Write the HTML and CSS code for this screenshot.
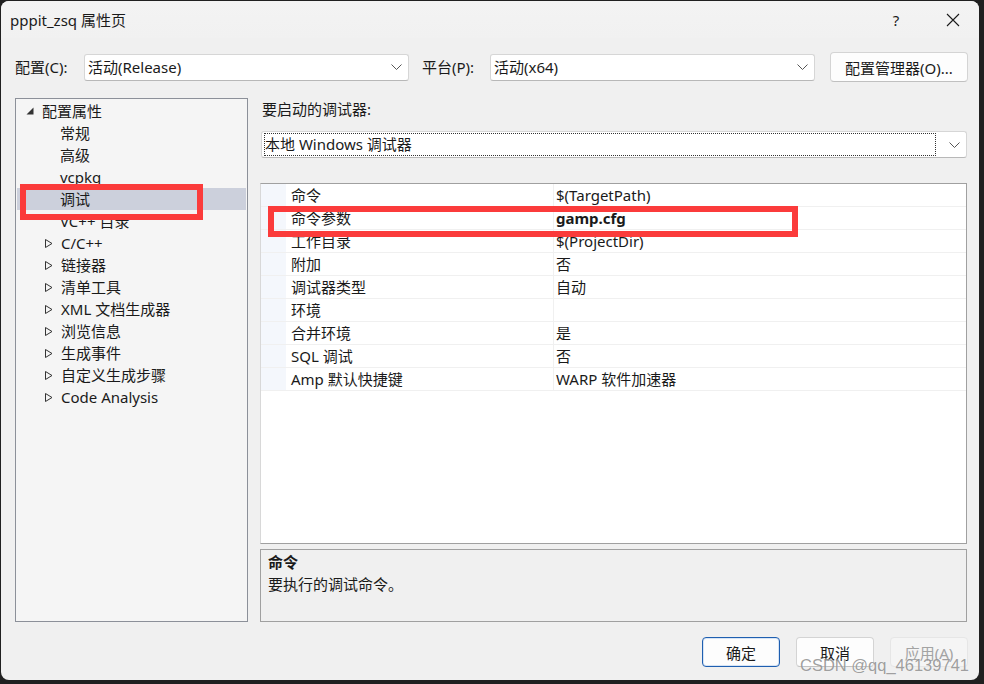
FILE: index.html
```html
<!DOCTYPE html>
<html lang="zh-CN">
<head>
    <meta charset="UTF-8">
    <title>pppit_zsq 属性页</title>
    <link rel="stylesheet" href="styles.css">
</head>
<body>
    <div class="window">
        <div class="titlebar">
            <span class="title">pppit_zsq 属性页</span>
            <span class="help">?</span>
            <span class="close">
                <svg width="14" height="14" viewBox="0 0 14 14"><path d="M1 1 L13 13 M13 1 L1 13" stroke="#1a1a1a" stroke-width="1.1" fill="none"/></svg>
            </span>
        </div>

        <div class="toolbar">
            <span class="label label-config">配置(C):</span>
            <div class="select select-config">
                <span class="select-text">活动(Release)</span>
                <svg class="chevron" width="11" height="6" viewBox="0 0 11 6"><path d="M0.5 0.5 L5.5 5.5 L10.5 0.5" stroke="#555" stroke-width="1" fill="none"/></svg>
            </div>
            <span class="label label-platform">平台(P):</span>
            <div class="select select-platform">
                <span class="select-text">活动(x64)</span>
                <svg class="chevron" width="11" height="6" viewBox="0 0 11 6"><path d="M0.5 0.5 L5.5 5.5 L10.5 0.5" stroke="#555" stroke-width="1" fill="none"/></svg>
            </div>
            <button class="btn btn-manager">配置管理器(O)...</button>
        </div>

        <div class="main">
            <div class="tree">
                <div class="tree-row">
                    <svg class="expander" width="8" height="8" viewBox="0 0 8 8"><path d="M7.5 0.5 L7.5 7.5 L0.5 7.5 Z" fill="#333"/></svg>
                    <span>配置属性</span>
                </div>
                <div class="tree-row child">常规</div>
                <div class="tree-row child">高级</div>
                <div class="tree-row child">vcpkq</div>
                <div class="tree-row child selected">调试</div>
                <div class="tree-row child">VC++ 目录</div>
                <div class="tree-row group"><svg class="expander" width="8" height="9" viewBox="0 0 8 9"><path d="M0.5 0.5 L7 4.5 L0.5 8.5 Z" stroke="#333" fill="none"/></svg><span>C/C++</span></div>
                <div class="tree-row group"><svg class="expander" width="8" height="9" viewBox="0 0 8 9"><path d="M0.5 0.5 L7 4.5 L0.5 8.5 Z" stroke="#333" fill="none"/></svg><span>链接器</span></div>
                <div class="tree-row group"><svg class="expander" width="8" height="9" viewBox="0 0 8 9"><path d="M0.5 0.5 L7 4.5 L0.5 8.5 Z" stroke="#333" fill="none"/></svg><span>清单工具</span></div>
                <div class="tree-row group"><svg class="expander" width="8" height="9" viewBox="0 0 8 9"><path d="M0.5 0.5 L7 4.5 L0.5 8.5 Z" stroke="#333" fill="none"/></svg><span>XML 文档生成器</span></div>
                <div class="tree-row group"><svg class="expander" width="8" height="9" viewBox="0 0 8 9"><path d="M0.5 0.5 L7 4.5 L0.5 8.5 Z" stroke="#333" fill="none"/></svg><span>浏览信息</span></div>
                <div class="tree-row group"><svg class="expander" width="8" height="9" viewBox="0 0 8 9"><path d="M0.5 0.5 L7 4.5 L0.5 8.5 Z" stroke="#333" fill="none"/></svg><span>生成事件</span></div>
                <div class="tree-row group"><svg class="expander" width="8" height="9" viewBox="0 0 8 9"><path d="M0.5 0.5 L7 4.5 L0.5 8.5 Z" stroke="#333" fill="none"/></svg><span>自定义生成步骤</span></div>
                <div class="tree-row group"><svg class="expander" width="8" height="9" viewBox="0 0 8 9"><path d="M0.5 0.5 L7 4.5 L0.5 8.5 Z" stroke="#333" fill="none"/></svg><span>Code Analysis</span></div>
            </div>

            <div class="content">
                <div class="debugger-label">要启动的调试器:</div>
                <div class="select select-debugger">
                    <span class="focus-box">本地 Windows 调试器</span>
                    <svg class="chevron" width="11" height="6" viewBox="0 0 11 6"><path d="M0.5 0.5 L5.5 5.5 L10.5 0.5" stroke="#555" stroke-width="1" fill="none"/></svg>
                </div>

                <div class="grid">
                    <div class="grid-row"><span class="gutter"></span><span class="name">命令</span><span class="value">$(TargetPath)</span></div>
                    <div class="grid-row"><span class="gutter"></span><span class="name">命令参数</span><span class="value bold">gamp.cfg</span></div>
                    <div class="grid-row"><span class="gutter"></span><span class="name">工作目录</span><span class="value">$(ProjectDir)</span></div>
                    <div class="grid-row"><span class="gutter"></span><span class="name">附加</span><span class="value">否</span></div>
                    <div class="grid-row"><span class="gutter"></span><span class="name">调试器类型</span><span class="value">自动</span></div>
                    <div class="grid-row"><span class="gutter"></span><span class="name">环境</span><span class="value"></span></div>
                    <div class="grid-row"><span class="gutter"></span><span class="name">合并环境</span><span class="value">是</span></div>
                    <div class="grid-row"><span class="gutter"></span><span class="name">SQL 调试</span><span class="value">否</span></div>
                    <div class="grid-row"><span class="gutter"></span><span class="name">Amp 默认快捷键</span><span class="value">WARP 软件加速器</span></div>
                    <div class="grid-rest"><span class="gutter"></span></div>
                </div>

                <div class="description">
                    <div class="desc-title">命令</div>
                    <div class="desc-text">要执行的调试命令。</div>
                </div>
            </div>
        </div>

        <div class="footer">
            <button class="btn btn-default">确定</button>
            <button class="btn">取消</button>
            <button class="btn btn-disabled">应用(A)</button>
        </div>

        <div class="mark mark-tree"></div>
        <div class="mark mark-grid"></div>
        <div class="watermark">CSDN @qq_46139741</div>
    </div>
</body>
</html>
```

FILE: styles.css
```css
body {
    margin: 0;
    background-color: #202020;
    font-family: "Noto Sans", "Noto Sans CJK SC", sans-serif;
    font-size: 15px;
    color: #1a1a1a;
}

.window {
    position: relative;
    margin: 1px 0 0 1px;
    width: 978px;
    height: 679px;
    border-radius: 8px;
    background-color: #f0f0f0;
    overflow: hidden;
    display: flex;
    flex-direction: column;
}

.titlebar {
    height: 37px;
    display: flex;
    align-items: center;
    padding-left: 9px;
    background: linear-gradient(#f3f3f3, #f1f1f1);
}

.title {
    flex: 1;
    line-height: 20px;
}

.help {
    width: 20px;
    margin-right: 40px;
    text-align: center;
    font-size: 15px;
}

.close {
    width: 14px;
    height: 14px;
    margin-right: 19px;
    display: flex;
}

.toolbar {
    margin-top: 14px;
    height: 30px;
    display: flex;
    align-items: center;
    padding-left: 14px;
}

.label {
    line-height: 20px;
}

.label-config {
    width: 69px;
}

.label-platform {
    width: 68px;
    margin-left: 13px;
}

.select {
    height: 27px;
    box-sizing: border-box;
    background-color: #ffffff;
    border: 1px solid #d6d6d6;
    border-bottom-color: #b8b8b8;
    border-radius: 3px;
    display: flex;
    align-items: center;
}

.select-text {
    flex: 1;
    padding-left: 3px;
    line-height: 20px;
}

.select-config,
.select-platform {
    width: 325px;
}

.chevron {
    margin-right: 6px;
}

.btn {
    font-family: inherit;
    font-size: 15px;
    color: #1a1a1a;
    background-color: #fdfdfd;
    border: 1px solid #d4d4d4;
    border-bottom-color: #c0c0c0;
    border-radius: 4px;
    padding: 0;
    height: 30px;
    width: 78px;
}

.btn-manager {
    width: 138px;
    margin-left: 15px;
}

.main {
    margin-top: 16px;
    height: 524px;
    display: flex;
    padding-left: 14px;
}

.tree {
    width: 233px;
    box-sizing: border-box;
    border: 1px solid #8c9099;
    background-color: #f5f5f5;
    padding-top: 1px;
}

.tree-row {
    height: 22px;
    line-height: 22px;
    display: flex;
    align-items: center;
    margin-left: 1px;
    margin-right: 1px;
}

.tree-row .expander {
    margin-left: 9px;
    margin-right: 8px;
}

.tree-row.child {
    padding-left: 43px;
}

.tree-row.group .expander {
    margin-left: 28px;
    margin-right: 8px;
}

.tree-row.selected {
    background-color: #ccd0dc;
}

.content {
    width: 707px;
    margin-left: 12px;
    display: flex;
    flex-direction: column;
}

.debugger-label {
    height: 22px;
    line-height: 22px;
    padding-left: 2px;
}

.select-debugger {
    margin-top: 11px;
    margin-left: 1px;
    width: 706px;
}

.focus-box {
    flex: 1;
    margin: 0 13px 0 2px;
    height: 21px;
    line-height: 21px;
    border: 1px dotted #333;
}

.grid {
    margin-top: 25px;
    height: 361px;
    box-sizing: border-box;
    border: 1px solid #a0a0a0;
    border-left-color: #d8d8d8;
    background-color: #ffffff;
    display: flex;
    flex-direction: column;
}

.grid-row {
    height: 23px;
    box-sizing: border-box;
    border-bottom: 1px solid #f0f0f0;
    display: flex;
    line-height: 22px;
}

.gutter {
    width: 25px;
    background-color: #f4f7fc;
    flex-shrink: 0;
}

.name {
    width: 268px;
    box-sizing: border-box;
    padding-left: 5px;
    border-right: 1px solid #f0f0f0;
}

.value {
    flex: 1;
    padding-left: 2px;
}

.bold {
    font-weight: bold;
}

.grid-rest {
    flex: 1;
    display: flex;
}

.grid-rest .gutter {
    background-color: #ffffff;
}

.description {
    margin-top: 5px;
    height: 73px;
    box-sizing: border-box;
    border: 1px solid #a0a0a0;
    background-color: #f0f0f0;
    padding: 1px 0 0 7px;
}

.desc-title {
    font-weight: bold;
    line-height: 22px;
}

.desc-text {
    line-height: 22px;
}

.footer {
    margin-top: 15px;
    display: flex;
    justify-content: flex-end;
    gap: 16px;
    padding-right: 11px;
}

.btn-default {
    border: 1px solid #1f5fb0;
    box-shadow: inset 0 0 0 1px #d6e4f5;
}

.btn-disabled {
    color: #a3a3a3;
    background-color: #f5f5f5;
    border-color: #e6e6e6;
}

/* 截图上的红色标注框 */
.mark {
    position: absolute;
    box-sizing: border-box;
    border: 6px solid #fb3b3b;
}

.mark-tree {
    left: 19px;
    top: 183px;
    width: 183px;
    height: 36px;
}

.mark-grid {
    left: 267px;
    top: 205px;
    width: 530px;
    height: 31px;
}

.watermark {
    position: absolute;
    right: 10px;
    bottom: 5px;
    font-family: "Liberation Sans", Arial, sans-serif;
    font-size: 16.5px;
    line-height: 20px;
    color: rgba(105, 105, 105, 0.65);
    text-shadow: 0 0 1px rgba(255, 255, 255, 0.8);
}
```
